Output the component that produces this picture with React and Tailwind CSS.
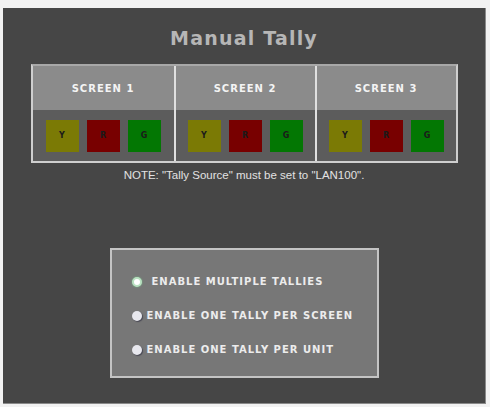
import { useState } from 'react'

const screens = ['SCREEN 1', 'SCREEN 2', 'SCREEN 3']

const modes = [
  { id: 'multi', label: 'ENABLE MULTIPLE TALLIES' },
  { id: 'screen', label: 'ENABLE ONE TALLY PER SCREEN' },
  { id: 'unit', label: 'ENABLE ONE TALLY PER UNIT' },
]

function TallyButton({ letter, className }) {
  return (
    <button
      className={`w-[33px] h-[32px] flex items-center justify-center text-[8px] font-bold text-[#1a1a1a] ${className}`}
    >
      {letter}
    </button>
  )
}

function Radio({ checked }) {
  if (checked) {
    return (
      <span className="w-[10px] h-[10px] rounded-full border-2 border-[#b8e0c0] bg-white shrink-0 shadow-[0_0_2px_rgba(120,200,140,0.8)]" />
    )
  }
  return (
    <span className="w-[10px] h-[10px] rounded-full bg-[#e8e8ee] shrink-0 shadow-[1px_1px_1px_rgba(40,40,60,0.6)]" />
  )
}

export default function App() {
  const [mode, setMode] = useState('multi')

  return (
    <div className="w-[490px] h-[407px] bg-[#f2f2f2] pt-[8px] pl-[3px] pr-[4px] pb-[3px] font-['DejaVu_Sans',sans-serif]">
      <div className="h-full bg-[#464646] border-r border-b border-[#8a8a8a] flex flex-col items-center">
        {/* title */}
        <h1 className="mt-[18px] text-[19px] leading-[24px] font-bold tracking-[1.2px] text-[#b6b6b6]">
          Manual Tally
        </h1>

        {/* tally grid */}
        <div className="mt-[14px] w-[427px] grid grid-cols-3 border-2 border-[#cfcfcf] border-t-[#a8a8a8]">
          {screens.map((s, i) => (
            <div key={s} className={`flex flex-col ${i > 0 ? 'border-l-2 border-[#e0e0e0]' : ''}`}>
              <div className="h-[44px] bg-[#8b8b8b] flex items-center justify-center text-[10px] font-bold tracking-[1px] text-[#f4f4f4]">
                {s}
              </div>
              <div className="h-[51px] bg-[#5c5c5c] flex items-center justify-center gap-[8px]">
                <TallyButton letter="Y" className="bg-[#7b7a05]" />
                <TallyButton letter="R" className="bg-[#780000]" />
                <TallyButton letter="G" className="bg-[#037703]" />
              </div>
            </div>
          ))}
        </div>

        <p className="mt-[5px] text-[11.5px] leading-[14px] text-[#e2e2e2] font-['Liberation_Sans',sans-serif]">
          NOTE: "Tally Source" must be set to "LAN100".
        </p>

        {/* tally mode options */}
        <div className="mt-[66px] w-[269px] h-[130px] bg-[#777777] border-2 border-[#c4c4c4] flex flex-col gap-[20px] pt-[25px] pl-[20px]">
          {modes.map((m) => (
            <label
              key={m.id}
              className="flex items-center gap-[5px] cursor-pointer text-[10px] leading-[14px] font-bold tracking-[1px] text-[#ececec]"
              onClick={() => setMode(m.id)}
            >
              <Radio checked={mode === m.id} />
              <span className={mode === m.id ? 'ml-[5px]' : ''}>{m.label}</span>
            </label>
          ))}
        </div>
      </div>
    </div>
  )
}
